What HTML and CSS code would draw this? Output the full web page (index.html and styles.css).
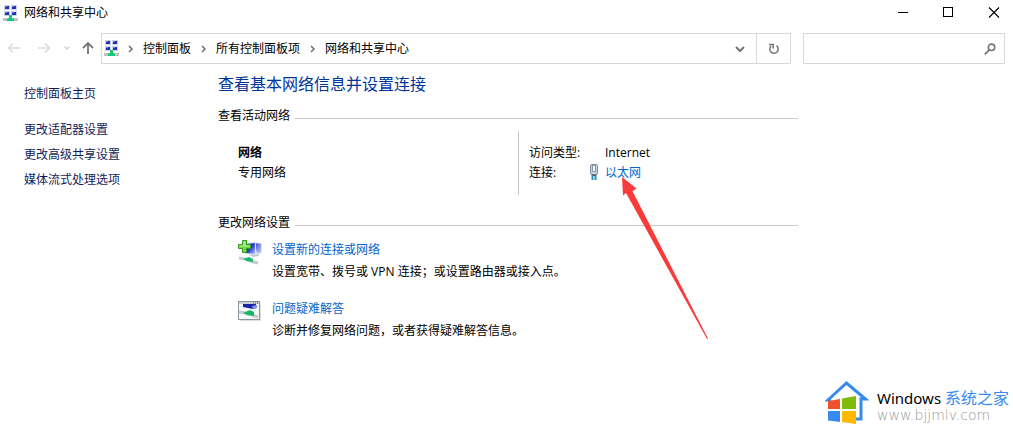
FILE: index.html
```html
<!DOCTYPE html>
<html lang="zh-CN">
<head>
<meta charset="utf-8">
<title>网络和共享中心</title>
<link rel="stylesheet" href="styles.css">
</head>
<body>
<svg class="defs" aria-hidden="true">
  <defs>
    <linearGradient id="screen" x1="0" y1="0" x2="1" y2="1">
      <stop offset="0" stop-color="#0a1590"/><stop offset="0.5" stop-color="#2b3fd0"/><stop offset="1" stop-color="#b9c6f8"/>
    </linearGradient>
    <linearGradient id="screen-far" x1="0" y1="0" x2="1" y2="1">
      <stop offset="0" stop-color="#3348c8"/><stop offset="1" stop-color="#c4cff8"/>
    </linearGradient>
    <symbol id="net" viewBox="0 0 16 16">
      <g fill="#c9d2e2">
        <rect x="1" y="0" width="6" height="5"/><rect x="8" y="0" width="6" height="5"/>
        <rect x="1" y="6" width="6" height="5"/><rect x="8" y="6" width="6" height="5"/>
      </g>
      <g fill="#2232b4">
        <rect x="2" y="1" width="4" height="3"/><rect x="9" y="1" width="4" height="3"/>
        <rect x="2" y="7" width="4" height="3"/><rect x="9" y="7" width="4" height="3"/>
      </g>
      <path d="M2 1h2v1h-2zM9 1h2v1h-2zM2 7h2v1h-2zM9 7h2v1h-2z" fill="#6f86e0"/>
      <rect x="0" y="13" width="15" height="3" fill="#b8c4c8"/>
      <path d="M6 10h3v3l2 1v2H4v-2l2-1z" fill="#14c878"/>
    </symbol>
    <symbol id="chevron" viewBox="0 0 8 8"><path d="M2 1l3 3-3 3" fill="none" stroke="#707070" stroke-width="1.5"/></symbol>
  </defs>
</svg>

<header class="titlebar">
  <svg class="net-icon"><use href="#net"/></svg>
  <span class="title">网络和共享中心</span>
  <button class="caption" aria-label="最小化"><svg width="12" height="12" viewBox="0 0 12 12"><path d="M1 5.5h10" stroke="#000"/></svg></button>
  <button class="caption" aria-label="最大化"><svg width="12" height="12" viewBox="0 0 12 12"><rect x=".5" y=".5" width="9" height="9" fill="none" stroke="#000"/></svg></button>
  <button class="caption" aria-label="关闭"><svg width="12" height="12" viewBox="0 0 12 12"><path d="M1 .5l10 10M11 .5L1 10.500" stroke="#000" stroke-width="1.1"/></svg></button>
</header>

<div class="toolbar">
  <div class="history">
    <button aria-label="后退" disabled><svg width="14" height="12" viewBox="0 0 14 12"><path d="M13 6H2M6 1.5L1.5 6 6 10.500" fill="none" stroke="#dcdcdc" stroke-width="1.5"/></svg></button>
    <button aria-label="前进" disabled><svg width="14" height="12" viewBox="0 0 14 12"><path d="M1 6h11M8 1.5L12.500 6 8 10.500" fill="none" stroke="#dcdcdc" stroke-width="1.5"/></svg></button>
    <button class="recent" aria-label="最近的位置" disabled><svg width="8" height="8" viewBox="0 0 8 8"><path d="M1.500 2.500L4 5l2.500-2.500" fill="none" stroke="#d0d0d0" stroke-width="1.300"/></svg></button>
    <button class="up" aria-label="向上"><svg width="12" height="14" viewBox="0 0 12 14"><path d="M6 13V2M1 7l5-5 5 5" fill="none" stroke="#757575" stroke-width="1.800"/></svg></button>
  </div>
  <nav class="address" aria-label="地址">
    <svg class="net-icon"><use href="#net"/></svg>
    <svg class="chev"><use href="#chevron"/></svg><a href="#">控制面板</a>
    <svg class="chev"><use href="#chevron"/></svg><a href="#">所有控制面板项</a>
    <svg class="chev"><use href="#chevron"/></svg><a href="#">网络和共享中心</a>
    <button class="drop" aria-label="以前的位置"><svg width="10" height="8" viewBox="0 0 10 8"><path d="M1 2l4 4 4-4" fill="none" stroke="#757575" stroke-width="2"/></svg></button>
    <button class="refresh" aria-label="刷新"><svg width="12" height="12" viewBox="0 0 12 12"><path d="M8.500 2.700A4.200 4.200 0 1 1 3.200 3M1 1.600h4.200v4" fill="none" stroke="#757575" stroke-width="1.500"/></svg></button>
  </nav>
  <form class="search">
    <input type="search" aria-label="搜索控制面板">
    <button type="button" aria-label="搜索"><svg width="12" height="12" viewBox="0 0 12 12"><circle cx="7.500" cy="4.300" r="3.200" fill="none" stroke="#757575" stroke-width="1.600"/><path d="M5.300 6.800L.8 11.300" stroke="#757575" stroke-width="1.800"/></svg></button>
  </form>
</div>

<div class="body">
  <nav class="side">
    <a class="home" href="#">控制面板主页</a>
    <a href="#">更改适配器设置</a>
    <a href="#">更改高级共享设置</a>
    <a href="#">媒体流式处理选项</a>
  </nav>
  <main>
    <h1>查看基本网络信息并设置连接</h1>
    <h2>查看活动网络</h2>
    <section class="active">
      <div class="network"><strong>网络</strong><span>专用网络</span></div>
      <dl>
        <dt>访问类型:</dt><dd>Internet</dd>
        <dt>连接:</dt>
        <dd class="link">
          <svg class="plug" width="10" height="16" viewBox="0 0 10 16"><rect x="1.500" y=".5" width="7" height="10" rx="1.500" fill="#c4d2de" stroke="#7e93a8"/><path d="M3.500 1.500h3v6h-3z" fill="#f4f8fa" stroke="#8496a8"/><path d="M2.500 10.500h5V12h-5z" fill="#54646f"/><path d="M3.500 12v4M6.500 12v4" stroke="#2496c4" stroke-width="2"/></svg>
          <a href="#">以太网</a>
          <svg class="pointer" width="88" height="166" viewBox="0 0 88 166" aria-hidden="true"><path d="M1 0L15.500 11.500L11.500 14.200L87 161.500L86 162L5 16L2 18.500Z" fill="#fb3b3a"/></svg>
        </dd>
      </dl>
    </section>
    <h2>更改网络设置</h2>
    <section class="tasks">
      <div class="task">
        <svg width="26" height="26" viewBox="0 0 26 26">
          <path d="M16 2l8 1v10l-3 2-5-1z" fill="#dfe4f0"/><path d="M17 3l6 1v8l-4 1z" fill="url(#screen-far)"/>
          <path d="M7 3l11-1v12l-2 1-9-1z" fill="#dfe4f0"/><path d="M8 4l9-1v11l-9-1z" fill="url(#screen)"/>
          <path d="M11 15l9-1 1 2-6 1z" fill="#c6ccd4"/>
          <path d="M1 18l6 1 8 3 5 1" fill="none" stroke="#c3ccd0" stroke-width="3"/>
          <path d="M5 19l6-2 4 2v3l-6-1z" fill="#16b968"/>
          <path d="M4.500 .5h4v4h4v4h-4v4h-4v-4h-4v-4h4z" fill="#72d944" stroke="#329b23"/>
          <path d="M5.500 1.500h2v4h4v1h-10v-1h4z" fill="#b3f18a"/>
        </svg>
        <div><a href="#">设置新的连接或网络</a><p>设置宽带、拨号或 VPN 连接；或设置路由器或接入点。</p></div>
      </div>
      <div class="task">
        <svg width="26" height="26" viewBox="0 0 26 26">
          <path d="M2 21h20v1H2zM22 4h1v18h-1z" fill="#dedede"/>
          <rect x=".5" y="2.500" width="21" height="18" fill="#f6f8f9" stroke="#8c949c"/>
          <path d="M1 4h20" stroke="#c8d0d8" stroke-width="2"/><path d="M15 4h1M17 4h1M19 4h1" stroke="#4a545e"/>
          <path d="M5 5h13v4l-3 1-10-2z" fill="#1724a8"/><path d="M14 7l5-1v3l-4 1z" fill="#8296e4"/>
          <path d="M1 13l7 1 12 4" fill="none" stroke="#c3ccd0" stroke-width="3"/>
          <path d="M5 14l7-3 4 2v4l-7-1z" fill="#16b968"/>
        </svg>
        <div><a href="#">问题疑难解答</a><p>诊断并修复网络问题，或者获得疑难解答信息。</p></div>
      </div>
    </section>
  </main>
</div>

<aside class="brand">
  <svg width="44" height="46" viewBox="0 0 44 46">
    <path d="M6 20H3L21.500 3 40.500 19H36V39H27" fill="none" stroke="#378bf0" stroke-width="3"/>
    <path d="M3 21l12-2v10H3z" fill="#f0512a"/>
    <path d="M17 18.600L31 16v13H17z" fill="#7fba0c"/>
    <path d="M3 31H15v11L3 40.500z" fill="#378bf0"/>
    <path d="M17 31h14v13L17 42z" fill="#fdb900"/>
  </svg>
  <div class="brand-text">
    <div class="brand-name">Windows <span>系统之家</span></div>
    <div class="brand-url">www.bjjmlv.com</div>
  </div>
</aside>
</body>
</html>
```

FILE: styles.css
```css
* { box-sizing: border-box; }
body {
  margin: 0;
  min-height: 100vh;
  position: relative;
  background: #fff;
  color: #000;
  font: 12px/20px "Open Sans", "Noto Sans CJK SC", sans-serif;
}
h1, h2, p, dl, dd { margin: 0; font-weight: normal; }
a { color: #0066cc; text-decoration: none; }
button { margin: 0; padding: 0; border: 0; background: none; display: grid; place-items: center; }
svg { display: block; flex: none; }
.defs { position: absolute; width: 0; height: 0; }
.net-icon { width: 16px; height: 16px; }

.titlebar { display: flex; align-items: center; height: 25px; padding-left: 3px; }
.title { flex: 1; padding-left: 5px; }
.caption { width: 46px; height: 24px; }
.caption:last-child { width: 44px; margin-right: -3px; }

.toolbar { display: flex; height: 31px; margin: 8px 8px 0 7px; }
.history { display: flex; width: 94px; padding-bottom: 1px; }
.history button { width: 14px; margin-right: 16px; }
.history .recent { width: 8px; margin: 0 10px 0 -4px; }
.history .up { width: 14px; margin: 0; }
.address { flex: 1; display: flex; align-items: center; border: 1px solid #d9d9d9; padding-left: 2px; }
.address .net-icon { margin-bottom: 1px; }
.address a { color: #000; }
.chev { width: 8px; height: 8px; margin: 0 8px 0 9px; }
.address .net-icon + .chev { margin-left: 7px; }
.drop { width: 32px; height: 29px; margin-left: auto; }
.refresh { width: 34px; height: 29px; border-left: 1px solid #d9d9d9; }
.search { display: flex; width: 202px; margin-left: 12px; border: 1px solid #d9d9d9; }
.search input { flex: 1; min-width: 0; border: 0; outline: 0; padding: 0 8px; background: none; }
.search button { width: 28px; }

.body { display: flex; padding: 8px 0 40px 24px; }
.side { width: 194px; padding-top: 12px; flex: none; }
.side a { display: block; color: #151c55; margin-bottom: 5px; }
.side .home { margin-bottom: 16px; }
main { flex: 1; max-width: 580px; }
h1 { color: #003399; font-size: 16px; line-height: 24px; }
h2 { display: flex; align-items: center; gap: 5px; font-size: 12px; margin-top: 10px; }
h2::after { content: ""; flex: 1; height: 1px; margin-top: 4px; background: #c8c8c8; }

.active { display: grid; grid-template-columns: 300px 1fr; margin: 5px 0 18px; min-height: 64px; }
.network { display: flex; flex-direction: column; padding: 12px 0 0 20px; }
.active dl { display: grid; grid-template-columns: 76px 1fr; align-content: start; padding: 12px 0 0 10px; border-left: 1px solid #c8c8c8; }
.active + h2 { margin-top: 0; }
.link { position: relative; }
.plug { position: absolute; left: -16px; top: 1px; }
.pointer { position: absolute; left: 16px; top: 14px; }

.tasks { padding: 7px 0 0 20px; }
.task { display: flex; gap: 8px; margin-bottom: 17px; }
.task a, .task p { display: block; line-height: 20px; }
.task p { margin-top: 2px; }

.brand { position: absolute; right: 4px; bottom: 4px; display: flex; align-items: center; gap: 8px; }
.brand-text { width: 132px; padding-top: 4px; white-space: nowrap; }
.brand-name { font: 15px/20px "Noto Sans", "Noto Sans CJK SC", sans-serif; }
.brand-name span { color: #378bf0; font-size: 16px; }
.brand-url { color: #999; font: 200 14px/14px "DejaVu Sans", sans-serif; }
```
